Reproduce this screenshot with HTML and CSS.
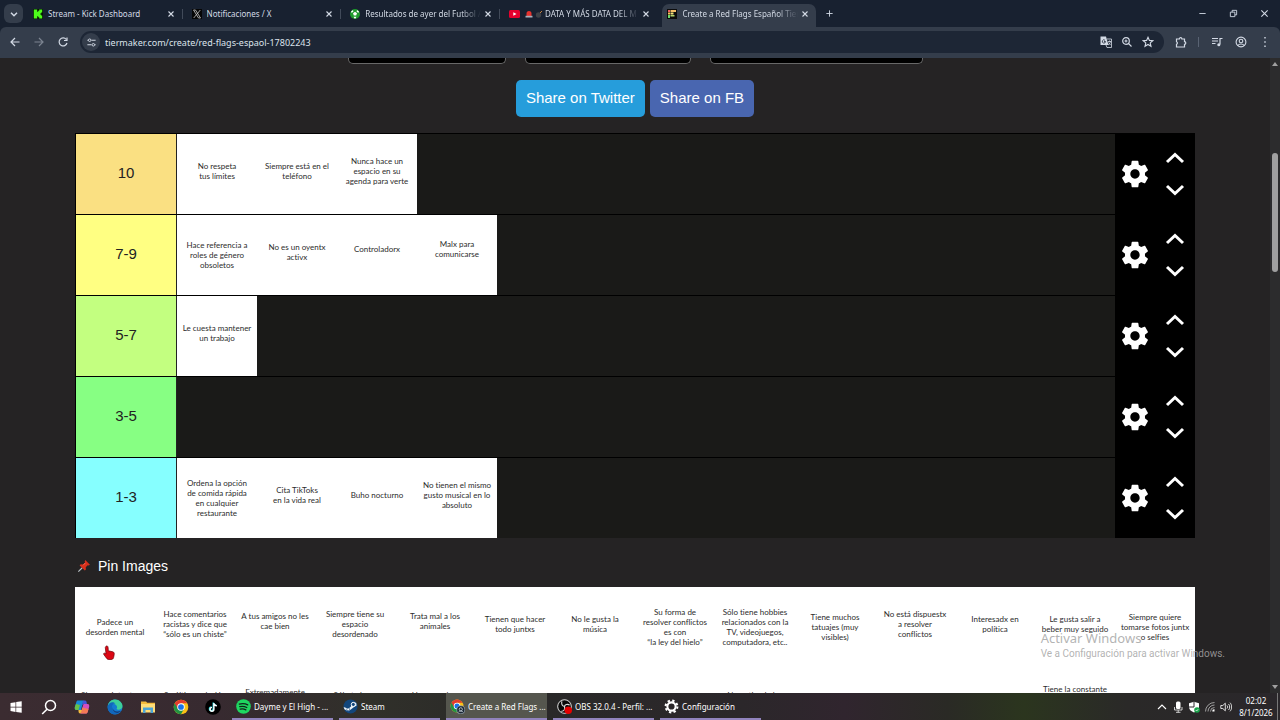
FILE: index.html
```html
<!DOCTYPE html>
<html lang="es">
<head>
<meta charset="utf-8">
<title>Create a Red Flags Español Tier List</title>
<link rel="stylesheet" href="styles.css">
</head>
<body>
<svg class="defs" aria-hidden="true">
  <symbol id="close" viewBox="0 0 10 10"><path d="M2.5 2.5l5 5M7.5 2.5l-5 5" fill="none" stroke="currentColor" stroke-width="1.1"/></symbol>
  <symbol id="gear" viewBox="0 0 24 24"><path fill="currentColor" d="M19.43 12.98c.04-.32.07-.64.07-.98s-.03-.66-.07-.98l2.11-1.65c.19-.15.24-.42.12-.64l-2-3.46c-.12-.22-.39-.3-.61-.22l-2.49 1c-.52-.4-1.08-.73-1.69-.98l-.38-2.65C14.46 2.18 14.25 2 14 2h-4c-.25 0-.46.18-.49.42l-.38 2.65c-.61.25-1.17.59-1.69.98l-2.49-1c-.23-.09-.49 0-.61.22l-2 3.46c-.13.22-.07.49.12.64l2.11 1.65c-.04.32-.07.65-.07.98s.03.66.07.98l-2.11 1.65c-.19.15-.24.42-.12.64l2 3.46c.12.22.39.3.61.22l2.49-1c.52.4 1.08.73 1.69.98l.38 2.65c.03.24.24.42.49.42h4c.25 0 .46-.18.49-.42l.38-2.65c.61-.25 1.17-.59 1.69-.98l2.49 1c.23.09.49 0 .61-.22l2-3.46c.12-.22.07-.49-.12-.64l-2.11-1.65zM12 15.5c-1.93 0-3.5-1.57-3.5-3.5s1.57-3.5 3.5-3.5 3.5 1.57 3.5 3.5-1.57 3.5-3.5 3.5z"/></symbol>
  <symbol id="up" viewBox="0 0 20 12"><path d="M2 10l8-7.5 8 7.5" fill="none" stroke="currentColor" stroke-width="3"/></symbol>
  <symbol id="down" viewBox="0 0 20 12"><path d="M2 2l8 7.5L18 2" fill="none" stroke="currentColor" stroke-width="3"/></symbol>
  <symbol id="chrome" viewBox="0 0 24 24"><circle cx="12" cy="12" r="11" fill="#fbc116"/><path d="M2.5 6.500A11 11 0 0 0 12 23l4.600-8.500L12 12z" fill="#229342"/><path d="M2.500 6.500A11 11 0 0 1 21.500 6.500H12L7.300 14.600z" fill="#e33b2e"/><circle cx="12" cy="12" r="5.600" fill="#fff"/><circle cx="12" cy="12" r="4.300" fill="#1a73e8"/></symbol>
</svg>

<header class="chrome">
  <div class="tabbar">
    <button class="tab-search" aria-label="Buscar pestañas"><svg viewBox="0 0 10 10"><path d="M2.500 4L5 6.500 7.500 4" fill="none" stroke="currentColor" stroke-width="1.200"/></svg></button>
    <div class="tabs">
      <div class="tab"><div class="tab-body">
        <svg class="fav" viewBox="0 0 10 10"><rect width="10" height="10" fill="#061306"/><path d="M.8.5h3.400v2.200h1v-1h1V.5h3v3h-1v1h-1v1h1v1h1v3h-3V8.300h-1v-1h-1v2.200H.8z" fill="#4dfc1b"/></svg>
        <span class="tab-title">Stream - Kick Dashboard</span>
        <button class="tab-close" aria-label="Cerrar"><svg><use href="#close"/></svg></button>
      </div></div>
      <div class="tab"><div class="tab-body">
        <svg class="fav" viewBox="0 0 10 10"><rect width="10" height="10" fill="#060606"/><path d="M1.500 1h2l5 8h-2zM8.300 1L1.700 9" fill="none" stroke="#c8c8c8" stroke-width=".8"/></svg>
        <span class="tab-title">Notificaciones / X</span>
        <button class="tab-close" aria-label="Cerrar"><svg><use href="#close"/></svg></button>
      </div></div>
      <div class="tab"><div class="tab-body">
        <svg class="fav" viewBox="0 0 10 10"><circle cx="5" cy="5" r="5" fill="#1d9b2c"/><path d="M5 2.800l2 1.500-.8 2.300H3.800L3 4.300zM1 2.500L3 1l.4 1.400L1.700 4zM9 2.500L7 1l-.4 1.400L8.300 4zM3.500 7.800h3L5.500 9.400h-1z" fill="#fff"/></svg>
        <span class="tab-title fade">Resultados de ayer del Futbol A</span>
        <button class="tab-close" aria-label="Cerrar"><svg><use href="#close"/></svg></button>
      </div></div>
      <div class="tab before-active"><div class="tab-body">
        <svg class="fav wide" viewBox="0 0 11 10"><rect y="1" width="11" height="8" rx="1.500" fill="#e5002d"/><path d="M4.300 3.200v3.600L7.500 5z" fill="#fff"/></svg>
        <span class="tab-title fade"><svg class="emoji" viewBox="0 0 8 8"><path d="M1.500 6V3.500a2.500 2.500 0 0 1 5 0V6z" fill="#e5322d"/><path d="M.5 5.800h7V7.500h-7z" fill="#a9b0bb"/></svg> <svg class="emoji" viewBox="0 0 8 8"><circle cx="3.500" cy="5" r="2.700" fill="#3d4247"/><path d="M5 3l2-2" stroke="#c9803c"/></svg> DATA Y MÁS DATA DEL M</span>
        <button class="tab-close" aria-label="Cerrar"><svg><use href="#close"/></svg></button>
      </div></div>
      <div class="tab active"><div class="tab-body">
        <svg class="fav" viewBox="0 0 10 10"><rect width="10" height="10" fill="#0c0c0c"/><path d="M1 1h2v2H1z" fill="#f0605f"/><path d="M1 3.500h2v2H1z" fill="#f8c35c"/><path d="M1 6h2v3H1z" fill="#6fdc6a"/><path d="M3.500 1H9v2H3.500z" fill="#f5bf66"/><path d="M3.500 3.500h3v2h-3z" fill="#f4e27a"/><path d="M3.500 6h4v1.500h-4z" fill="#b5d66d"/></svg>
        <span class="tab-title fade">Create a Red Flags Español Tier</span>
        <button class="tab-close" aria-label="Cerrar"><svg><use href="#close"/></svg></button>
      </div></div>
    </div>
    <button class="new-tab" aria-label="Nueva pestaña"><svg viewBox="0 0 10 10"><path d="M5 1.500v7M1.500 5h7" stroke="currentColor"/></svg></button>
    <div class="window-buttons">
      <button aria-label="Minimizar"><svg viewBox="0 0 10 10"><path d="M1.500 5h7" stroke="currentColor"/></svg></button>
      <button aria-label="Restaurar"><svg viewBox="0 0 10 10"><path d="M1.500 3.500h5v5h-5zM3.500 3.500v-2h5v5h-2" fill="none" stroke="currentColor"/></svg></button>
      <button aria-label="Cerrar ventana"><svg viewBox="0 0 10 10"><path d="M1.500 1.500l7 7M8.500 1.500l-7 7" stroke="currentColor" stroke-width="1.200"/></svg></button>
    </div>
  </div>
  <div class="toolbar">
    <div class="nav">
      <button aria-label="Atrás"><svg viewBox="0 0 12 12"><path d="M10.500 6H2M6 2L2 6l4 4" fill="none" stroke="currentColor" stroke-width="1.200"/></svg></button>
      <button class="dim" aria-label="Adelante"><svg viewBox="0 0 12 12"><path d="M1.500 6H10M6 2l4 4-4 4" fill="none" stroke="currentColor" stroke-width="1.200"/></svg></button>
      <button aria-label="Recargar"><svg viewBox="0 0 12 12"><path d="M9.300 3.500A4 4 0 1 0 10 7M10 1.500v3H7" fill="none" stroke="currentColor" stroke-width="1.200"/></svg></button>
    </div>
    <div class="omnibox">
      <button class="site-info" aria-label="Información del sitio"><svg viewBox="0 0 12 12"><path d="M1.500 3.500h1M6 3.500h4.500M1.500 8.500H6M9.500 8.500h1" stroke="currentColor" stroke-width="1.200"/><circle cx="4" cy="3.500" r="1.400" fill="none" stroke="currentColor"/><circle cx="8" cy="8.500" r="1.400" fill="none" stroke="currentColor"/></svg></button>
      <input class="url" type="text" aria-label="Dirección" value="tiermaker.com/create/red-flags-espaol-17802243">
      <button aria-label="Traducir"><svg viewBox="0 0 12 12"><path d="M.5.5H6l2.500 8.500h-8z" fill="currentColor"/><path d="M7 3h4.500v8.500H7L6 9M8 5.500h3M9.500 4.500v1M10.500 5.500c-.5 2-1.500 3-2.500 3.500M8.500 6.500l2 2.500" fill="none" stroke="currentColor" stroke-width=".8"/><path d="M5 4.300A1.600 1.600 0 1 0 5.500 5.500H4" fill="none" stroke="#1d2635" stroke-width=".8"/></svg></button>
      <button aria-label="Zoom"><svg viewBox="0 0 12 12"><circle cx="5" cy="5" r="3.300" fill="none" stroke="currentColor" stroke-width="1.200"/><path d="M7.500 7.500l3 3M3.500 5h3M5 3.500v3" stroke="currentColor" stroke-width="1.100"/></svg></button>
      <button aria-label="Marcador"><svg viewBox="0 0 12 12"><path d="M6 1.300l1.400 3.100 3.400.3-2.600 2.200.8 3.400L6 8.500l-3 1.800.8-3.400L1.200 4.700l3.400-.3z" fill="none" stroke="currentColor" stroke-width="1.100"/></svg></button>
    </div>
    <div class="actions">
      <button aria-label="Extensiones"><svg viewBox="0 0 12 12"><path d="M1.500 3h2.800a1.300 1.300 0 0 1 2.600 0h2.600v2.700a1.300 1.300 0 0 1 0 2.600V11h-8V8.300a1.400 1.400 0 0 0 0-2.600z" fill="none" stroke="currentColor" stroke-width="1.200"/></svg></button>
      <span class="divider"></span>
      <button aria-label="Multimedia"><svg viewBox="0 0 12 12"><path d="M1 2.500h6M1 5h6M1 7.500h3.500M9 8.500V2.500h2.500" fill="none" stroke="currentColor" stroke-width="1.200"/><circle cx="7.800" cy="8.800" r="1.500" fill="currentColor"/></svg></button>
      <button aria-label="Perfil"><svg viewBox="0 0 12 12"><circle cx="6" cy="6" r="4.900" fill="none" stroke="currentColor" stroke-width="1.100"/><circle cx="6" cy="5" r="1.800" fill="none" stroke="currentColor" stroke-width="1.100"/><path d="M2.800 9.500c1.500-2 5-2 6.400 0" fill="none" stroke="currentColor" stroke-width="1.100"/></svg></button>
      <button aria-label="Menú"><svg viewBox="0 0 12 12"><path d="M5.300 1h1.400v1.400H5.300zM5.300 5.300h1.400v1.400H5.300zM5.300 9.600h1.400V11H5.300z" fill="currentColor"/></svg></button>
    </div>
  </div>
</header>

<div class="viewport">
  <main class="page">
    <div class="menu-row"><span class="menu-pill"></span><span class="menu-pill medium"></span><span class="menu-pill large"></span></div>
    <div class="share-row">
      <button class="share twitter">Share on Twitter</button>
      <button class="share facebook">Share on FB</button>
    </div>

    <section class="tiers">
      <div class="tier">
        <div class="label gold">10</div>
        <div class="cards">
          <div class="card">No respeta<br>tus límites</div>
          <div class="card">Siempre está en el<br>teléfono</div>
          <div class="card">Nunca hace un<br>espacio en su<br>agenda para verte</div>
        </div>
        <div class="controls"><button class="gear" aria-label="Ajustes"><svg><use href="#gear"/></svg></button><div class="arrows"><button aria-label="Subir"><svg><use href="#up"/></svg></button><button aria-label="Bajar"><svg><use href="#down"/></svg></button></div></div>
      </div>
      <div class="tier">
        <div class="label yellow">7-9</div>
        <div class="cards">
          <div class="card low">Hace referencia a<br>roles de género<br>obsoletos</div>
          <div class="card">No es un oyentx<br>activx</div>
          <div class="card high">Controladorx</div>
          <div class="card high">Malx para<br>comunicarse</div>
        </div>
        <div class="controls"><button class="gear" aria-label="Ajustes"><svg><use href="#gear"/></svg></button><div class="arrows"><button aria-label="Subir"><svg><use href="#up"/></svg></button><button aria-label="Bajar"><svg><use href="#down"/></svg></button></div></div>
      </div>
      <div class="tier">
        <div class="label lime">5-7</div>
        <div class="cards">
          <div class="card">Le cuesta mantener<br>un trabajo</div>
        </div>
        <div class="controls"><button class="gear" aria-label="Ajustes"><svg><use href="#gear"/></svg></button><div class="arrows"><button aria-label="Subir"><svg><use href="#up"/></svg></button><button aria-label="Bajar"><svg><use href="#down"/></svg></button></div></div>
      </div>
      <div class="tier">
        <div class="label green">3-5</div>
        <div class="cards"></div>
        <div class="controls"><button class="gear" aria-label="Ajustes"><svg><use href="#gear"/></svg></button><div class="arrows"><button aria-label="Subir"><svg><use href="#up"/></svg></button><button aria-label="Bajar"><svg><use href="#down"/></svg></button></div></div>
      </div>
      <div class="tier">
        <div class="label cyan">1-3</div>
        <div class="cards">
          <div class="card low">Ordena la opción<br>de comida rápida<br>en cualquier<br>restaurante</div>
          <div class="card">Cita TikToks<br>en la vida real</div>
          <div class="card">Buho nocturno</div>
          <div class="card">No tienen el mismo<br>gusto musical en lo<br>absoluto</div>
        </div>
        <div class="controls"><button class="gear" aria-label="Ajustes"><svg><use href="#gear"/></svg></button><div class="arrows"><button aria-label="Subir"><svg><use href="#up"/></svg></button><button aria-label="Bajar"><svg><use href="#down"/></svg></button></div></div>
      </div>
    </section>

    <h2 class="pin-title"><svg viewBox="0 0 16 16"><path d="M6 10L1.500 14.500" stroke="#b8c0c4" stroke-width="1.300"/><path d="M9.500 1.200l5.300 5.300-1.600.8-1-.3-2.200 2.300.2 2.600-1.300 1.300L3 7.300l1.200-1.200 2.800.1 2.200-2.200-.4-1.200z" fill="#d9301c"/><path d="M9.500 4.500L7 7.200" stroke="#f7705c"/></svg>Pin Images</h2>

    <section class="pool">
      <div class="card low">Padece un<br>desorden mental</div>
      <div class="card">Hace comentarios<br>racistas y dice que<br>“sólo es un chiste”</div>
      <div class="card high">A tus amigos no les<br>cae bien</div>
      <div class="card">Siempre tiene su<br>espacio<br>desordenado</div>
      <div class="card high">Trata mal a los<br>animales</div>
      <div class="card">Tienen que hacer<br>todo juntxs</div>
      <div class="card">No le gusta la<br>música</div>
      <div class="card low">Su forma de<br>resolver conflictos<br>es con<br>“la ley del hielo”</div>
      <div class="card low">Sólo tiene hobbies<br>relacionados con la<br>TV, videojuegos,<br>computadora, etc..</div>
      <div class="card low">Tiene muchos<br>tatuajes (muy<br>visibles)</div>
      <div class="card">No está dispuestx<br>a resolver<br>conflictos</div>
      <div class="card">Interesadx en<br>política</div>
      <div class="card">Le gusta salir a<br>beber muy seguido</div>
      <div class="card low">Siempre quiere<br>tomarse fotos juntx<br>o selfies</div>
      <div class="card cut">Siempre intenta ser</div>
      <div class="card cut">Su última relación</div>
      <div class="card cut tall">Extremadamente</div>
      <div class="card cut">Sólo te hace</div>
      <div class="card cut">Hace muchas</div>
      <div class="card"></div>
      <div class="card"></div>
      <div class="card"></div>
      <div class="card cut">No entiende los</div>
      <div class="card"></div>
      <div class="card"></div>
      <div class="card"></div>
      <div class="card cut taller">Tiene la constante</div>
      <div class="card"></div>
    </section>
  </main>
  <div class="scrollbar">
    <svg viewBox="0 0 10 10"><path d="M2 7l3-4 3 4z" fill="currentColor"/></svg>
    <div class="track"><div class="thumb"></div></div>
    <svg viewBox="0 0 10 10"><path d="M2 3l3 4 3-4z" fill="currentColor"/></svg>
  </div>
</div>

<footer class="taskbar">
  <div class="pinned">
    <button aria-label="Inicio"><svg viewBox="0 0 16 16"><path d="M2.500 4l5-.8v4.500h-5zM8.200 3.100l5.500-.8v5.400H8.200zM2.500 8.400h5v4.500l-5-.8zM8.200 8.400h5.500v5.400L8.200 13z" fill="#fff"/></svg></button>
    <button aria-label="Buscar"><svg viewBox="0 0 16 16"><circle cx="9.500" cy="6.500" r="5" fill="none" stroke="#fff" stroke-width="1.500"/><path d="M6 10.200L1.200 15" stroke="#fff" stroke-width="1.600"/></svg></button>
    <button aria-label="Copilot"><svg viewBox="0 0 16 16"><path d="M4 1.500h5.500L7 11H2.500C.5 11 .5 9 1 7.500L2.200 3.500C2.600 2 3 1.500 4 1.500z" fill="#1689d8"/><path d="M1 7.500L2 5l4 1-1.500 5h-2C.5 11 .5 9 1 7.500z" fill="#68c24a"/><path d="M9 1.500h2c1.300 0 1.500 1 2 3.500H9.500L8 6.500z" fill="#4456d9"/><path d="M9.500 5h4c2 0 2 2 1.500 3.500l-1.200 4c-.4 1.500-1 2-2 2H6.500z" fill="#d14ec0"/><path d="M8.500 8.500l6 1.500-.7 2.500c-.4 1.500-1 2-2 2H6.500z" fill="#f47a55"/><path d="M4.500 11H8l-1.500 3.500C4.500 14.500 4.500 13 4.500 11z" fill="#f5bd3e"/></svg></button>
    <button aria-label="Edge"><svg viewBox="0 0 16 16"><circle cx="8" cy="8" r="7.500" fill="#147bd1"/><path d="M.8 7C1.500 2.500 5 .5 8 .5c4.500 0 7.500 3.500 7.500 6.500 0 2.500-2 3.700-4 3.700-1.600 0-2.500-.7-1.500-1.700C11 6 5 2.500.8 7z" fill="#3ccf9a"/><path d="M.8 7C2 3 6 2 8.500 4.500 5.500 4 4.500 7 5 9.500c.6 3 3.500 5 7 4.500-5 3.500-12 0-11.200-7z" fill="#1167bd"/><path d="M5.500 8c0 4 4 5.500 8.500 3.800-2.500 4-9 2-8.500-3.800z" fill="#163b78"/></svg></button>
    <button aria-label="Explorador"><svg viewBox="0 0 16 16"><path d="M1 2.500h5l1.200 1.300H15V13H1z" fill="#f4bb3d"/><path d="M1 5h14v8.500H1z" fill="#ffdc78"/><path d="M3 8.500h10v5.500h-2.500v-3h-5v3H3z" fill="#4ca4d7"/></svg></button>
    <button aria-label="Chrome"><svg><use href="#chrome"/></svg></button>
    <button aria-label="TikTok"><svg viewBox="0 0 16 16"><circle cx="8" cy="8" r="7.800" fill="#000"/><path d="M8.300 3.500v6.300a1.900 1.900 0 1 1-1.900-1.900M8.300 3.500c.2 1.700 1.300 2.700 3 2.900" fill="none" stroke="#29d9dd" stroke-width="1.500"/><path d="M8.900 4v6.300A1.900 1.900 0 1 1 7 8.400M8.900 4c.2 1.700 1.300 2.700 3 2.900" fill="none" stroke="#fff" stroke-width="1.400"/></svg></button>
  </div>
  <div class="apps">
    <button class="app"><svg viewBox="0 0 16 16"><circle cx="8" cy="8" r="7.800" fill="#1ed760"/><path d="M3.500 5.500c3-.9 6.300-.7 9 .8M4 8.200c2.500-.7 5.300-.4 7.500.9M4.500 10.800c2-.5 4.200-.3 6 .8" fill="none" stroke="#10251a" stroke-width="1.400" stroke-linecap="round"/></svg><span>Dayme y El High - ...</span></button>
    <button class="app"><svg viewBox="0 0 16 16"><circle cx="8" cy="8" r="7.500" fill="#12467c"/><path d="M.7 8.500l5 2L8.500 8 10 3.500l4 .5.500 3-3.500 2-3 2.500-2.500 1.500L1.500 11z" fill="#e9f1f7"/><circle cx="11" cy="5.800" r="2.200" fill="#12467c" stroke="#fff"/><circle cx="5.500" cy="11" r="1.500" fill="#fff" stroke="#12467c" stroke-width=".7"/></svg><span>Steam</span></button>
    <button class="app current"><svg viewBox="0 0 16 16"><use href="#chrome" width="15" height="15"/><circle cx="11.500" cy="11.500" r="4.300" fill="#1b2733" stroke="#a6b4c2" stroke-width=".7"/><circle cx="11.500" cy="11" r="1.700" fill="none" stroke="#d5dfe8" stroke-width=".8"/><path d="M9 14c1-1.500 4-1.500 5 0" fill="none" stroke="#d5dfe8" stroke-width=".8"/></svg><span>Create a Red Flags ...</span></button>
    <button class="app"><svg viewBox="0 0 16 16"><circle cx="8" cy="8" r="7.300" fill="#c9c9c9" stroke="#e5e5e5" stroke-width=".9"/><circle cx="8" cy="8" r="6.700" fill="#080808"/><path d="M5.200 2.500c-.8 3 .3 5 2.800 5.500M13.500 6.500c-2.500-1.500-5-.5-5.500 1.500M4.500 13c3 .3 4.300-2 3.500-5" fill="none" stroke="#ddd" stroke-width="1.200"/><circle cx="12" cy="12" r="4" fill="#e60000"/></svg><span>OBS 32.0.4 - Perfil: ...</span></button>
    <button class="app"><svg viewBox="0 0 16 16"><circle cx="8" cy="8" r="4.400" fill="none" stroke="#fff" stroke-width="2.200"/><circle cx="8" cy="8" r="6.300" fill="none" stroke="#fff" stroke-width="2.200" stroke-dasharray="2.474 2.474"/></svg><span>Configuración</span></button>
  </div>
  <div class="tray">
    <svg viewBox="0 0 12 12"><path d="M2 8l4-4 4 4" fill="none" stroke="#fff" stroke-width="1.100"/></svg>
    <svg viewBox="0 0 12 12"><rect x="4" y=".5" width="4.500" height="7.500" rx="1.500" fill="#fff"/><path d="M2.500 6v3h7.500V6M6.200 9v2.500M4 11.300h4.500" fill="none" stroke="#ddd" stroke-width=".9"/></svg>
    <svg viewBox="0 0 12 12"><path d="M6 .8l5 1.500v3.500c0 3-2.500 4.800-5 5.700C3.500 10.600 1 8.800 1 5.800V2.300z" fill="#fff"/><path d="M6 1v5M1 6h5" stroke="#302c30"/><circle cx="9" cy="9" r="2.800" fill="#19a34a"/><path d="M7.700 9l1 1 1.500-1.800" fill="none" stroke="#fff" stroke-width=".7"/></svg>
    <svg viewBox="0 0 12 12"><path d="M1.500 10.500A9 9 0 0 1 10.500 1.500M4 10.500A6.500 6.500 0 0 1 10.500 4M6.500 10.500a4 4 0 0 1 4-4" fill="none" stroke="#aaa" stroke-width=".9"/><path d="M8.300 10.500a2 2 0 0 1 2.200-2.200v2.200z" fill="#fff"/></svg>
    <svg viewBox="0 0 12 12"><path d="M.8 4.500h2l2.500-2.300v7.600L2.800 7.500h-2zM7 4.500c.8.800.8 2.200 0 3M8.500 3c1.600 1.500 1.600 4.500 0 6M10 1.700c2.200 2.300 2.200 6.300 0 8.600" fill="none" stroke="#eee" stroke-width=".9"/></svg>
    <div class="clock"><time>02:02</time><time>8/1/2026</time></div>
    <span class="peek"></span>
  </div>
</footer>

<div class="watermark"><div class="wm-title">Activar Windows</div><div>Ve a Configuración para activar Windows.</div></div>
<svg class="cursor" viewBox="0 0 12 15"><path d="M3 1.200c1.300-.8 2 .2 2.100 1.300l.2 3.300 4.500 1c1.400.4 1.600 1.500 1.400 2.700l-.6 3c-.3 1.400-1.300 2-2.600 2H6c-1.300 0-2-.6-2.700-1.600L.8 9.500C.2 8.500 1 7.800 2 8.300l1 .7-.7-6.500z" fill="#dc0714" stroke="#6b0208" stroke-width=".7"/></svg>
</body>
</html>
```
FILE: styles.css
```css
* { box-sizing: border-box; }

body {
  margin: 0;
  height: 100vh;
  display: flex;
  flex-direction: column;
  overflow: hidden;
  background: #252324;
  color: #fff;
  font-family: "Noto Sans", "Open Sans", sans-serif;
  font-size: 8px;
}

button {
  display: flex;
  align-items: center;
  justify-content: center;
  margin: 0;
  padding: 0;
  border: 0;
  background: none;
  color: inherit;
  font: inherit;
}

svg { display: block; flex: none; }
.defs { position: absolute; width: 0; height: 0; }

/* Browser frame */
.chrome { flex: none; background: #182130; color: #d3dae5; }
.tabbar { display: flex; height: 27px; padding-left: 4px; }
.tab-search { width: 19px; height: 19px; margin: 4px 1px 0 0; border-radius: 6px; background: #343d4b; }
.tab-search svg { width: 12px; height: 12px; }
.tabs { display: flex; flex: 1; max-width: 793px; }
.tab { flex: 1; min-width: 0; display: flex; position: relative; padding: 4px 1px 0 4px; }
.tab::after { content: ""; position: absolute; right: 0; top: 9px; width: 1px; height: 10px; background: #414a59; }
.tab.before-active::after, .tab.active::after { display: none; }
.tab-body { display: flex; flex: 1; align-items: center; min-width: 0; padding: 0 6px 4px 5px; border-radius: 7px 7px 0 0; }
.active .tab-body { background: #343d4b; }
.fav { width: 10px; height: 10px; }
.fav.wide { width: 11px; }
.tab-title { flex: 1; min-width: 0; margin: 0 2px 0 5px; overflow: hidden; white-space: nowrap; line-height: 14px; }
.tab-title.fade { mask-image: linear-gradient(to right, #000 82%, transparent); }
.emoji { display: inline-block; width: 8px; height: 8px; vertical-align: -1px; }
.tab-close svg { width: 10px; height: 10px; }
.new-tab { width: 24px; }
.new-tab svg { width: 9px; height: 9px; }
.window-buttons { display: flex; margin-left: auto; }
.window-buttons button { width: 31px; }
.window-buttons svg { width: 9px; height: 9px; }

.toolbar { display: flex; align-items: center; height: 31px; padding-bottom: 1px; border-radius: 6px 6px 0 0; background: #343d4b; }
.nav { display: flex; width: 80px; padding-left: 3px; }
.nav button { width: 24px; }
.nav svg, .omnibox svg, .actions svg { width: 12px; height: 12px; }
.dim { opacity: .45; }
.omnibox { display: flex; flex: 1; align-items: center; height: 22px; padding: 0 6px 0 2px; border-radius: 11px; background: #1d2635; }
.omnibox button { width: 21px; }
.omnibox .site-info { width: 18px; height: 18px; border-radius: 50%; background: #343d4b; }
.omnibox .site-info svg { width: 11px; height: 11px; }
.url { flex: 1; min-width: 0; padding: 0; margin-left: 5px; border: 0; background: none; color: #dce2eb; font: inherit; font-size: 9px; outline: 0; }
.actions { display: flex; align-items: center; width: 116px; padding-left: 5px; }
.actions button { width: 24px; }
.divider { width: 1px; height: 10px; margin: 0 6px 0 5px; background: #596373; }

/* Page */
.viewport { display: flex; flex: 1; min-height: 0; overflow: hidden; }
.page { flex: 1; min-width: 0; overflow: hidden; padding: 0 75px; font-family: "Liberation Sans", Arial, sans-serif; }
.menu-row { display: flex; justify-content: center; gap: 19px; }
.menu-pill { width: 158px; height: 6px; border: 1px solid #686868; border-top: 0; border-radius: 0 0 5px 5px; background: #000; }
.menu-pill.medium { width: 166px; }
.menu-pill.large { width: 213px; }
.share-row { display: flex; justify-content: center; gap: 5px; padding: 16px 0; }
.share { height: 37px; padding: 0 10px 2px; border-radius: 5px; color: #fff; font-size: 15px; }
.twitter { background: #269ddb; }
.facebook { background: #4966b0; }

.tiers { border: solid #000; border-width: 0 0 0 1px; }
.tier { display: flex; min-height: 81px; border-top: 1px solid #000; background: #1a1a18; }
.label { display: flex; align-items: center; justify-content: center; width: 101px; padding-bottom: 4px; border-right: 1px solid #222; color: #222; font-size: 15px; }
.gold { background: #fae082; }
.yellow { background: #ffff82; }
.lime { background: #c3ff80; }
.green { background: #87ff83; }
.cyan { background: #86ffff; }
.cards { display: flex; flex: 1; flex-wrap: wrap; }
.card { display: flex; align-items: center; justify-content: center; width: 80px; height: 80px; padding-bottom: 6px; background: #fff; color: #2c2c2c; font-family: Lato, sans-serif; font-size: 8px; line-height: 10px; text-align: center; white-space: nowrap; font-variant-ligatures: none; }
.card.low { padding-bottom: 0; }
.card.high { padding-bottom: 12px; }
.card.cut { align-items: flex-start; padding-top: 23px; }
.card.cut.tall { padding-top: 20px; }
.card.cut.taller { padding-top: 17px; }
.controls { display: flex; width: 80px; margin-top: -1px; background: #000; }
.controls button { width: 40px; }
.gear svg { width: 32px; height: 32px; }
.arrows { display: flex; flex-direction: column; justify-content: center; gap: 20px; }
.arrows svg { width: 20px; height: 12px; }

.pin-title { display: flex; align-items: center; gap: 7px; height: 49px; margin: 0; padding: 6px 0 0 2px; font-size: 14px; font-weight: 400; }
.pin-title svg { width: 14px; height: 14px; }
.pool { display: flex; flex-wrap: wrap; background: #fff; }

.scrollbar { display: flex; flex-direction: column; align-items: center; width: 10px; background: #2c2c2d; color: #a0a0a0; }
.scrollbar svg { width: 10px; height: 12px; }
.track { display: flex; flex: 1; align-items: flex-start; padding-top: 83px; }
.thumb { width: 6px; height: 119px; border-radius: 3px; background: #a0a0a0; }

/* Taskbar */
.taskbar { display: flex; flex: none; height: 27px; background: linear-gradient(to right, #3b2c31, #372a30 17%, #30302a 29%, #292828 42%, #2b272a 58%, #30252e 66%, #2a2a25 74%, #2b351e 80%, #2a2928 88%, #2a272b); }
.pinned { display: flex; justify-content: space-around; width: 230px; }
.pinned svg { width: 16px; height: 16px; }
.apps { display: flex; gap: 6px; padding-left: 2px; }
.app { justify-content: flex-start; gap: 3px; width: 101px; padding: 2px 0 0 4px; border-bottom: 2px solid #9183bd; white-space: nowrap; }
.app svg { width: 15px; height: 15px; }
.app.current { background: #55564e; }
.tray { display: flex; align-items: center; gap: 4px; margin-left: auto; }
.tray svg { width: 12px; height: 12px; }
.clock { display: flex; flex-direction: column; align-items: center; width: 40px; line-height: 12px; }
.peek { width: 1px; height: 27px; margin: 0 2px 0 -3px; background: #777; }

/* Overlays */
.watermark { position: absolute; right: 55px; bottom: 59px; color: rgba(165, 165, 165, .85); font-family: Roboto, sans-serif; font-size: 10px; line-height: 15px; white-space: nowrap; }
.wm-title { font-family: "Noto Sans", sans-serif; font-size: 13px; }
.cursor { position: absolute; left: 103px; top: 645px; width: 12px; height: 15px; }
```
